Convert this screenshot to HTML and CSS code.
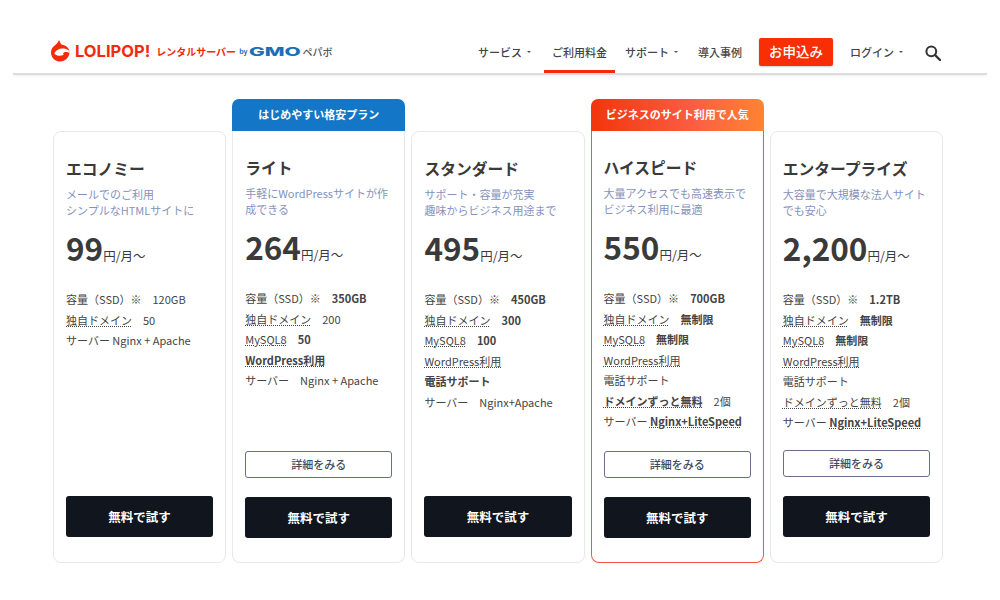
FILE: index.html
```html
<!DOCTYPE html>
<html lang="ja">
<head>
    <meta charset="utf-8">
    <title>料金プラン</title>
    <link rel="stylesheet" href="styles.css">
</head>
<body>
    <header class="header">
        <div class="logo">
            <svg class="logo-mark" width="19" height="22" viewBox="0 0 19 22">
                <path d="M8 0c1.500 2.200 1 3.800 3 4.700 3.800.4 7.500 3.400 7.500 7.400 0 5.300-4.300 9.400-9.300 9.400C4 21.500 0 17.300 0 12.400 0 8.800 2 6.800 4 5.200 5.800 3.800 7 2.500 8 0z" fill="#f32a0c"/>
                <path d="M3.500 13c2-3.500 5.500-5 9-4.500 2.500.3 5 1.300 6 3v1.500c-1.500-1-4-1.200-5.500-.5-1.200.6-1 1.800-.2 2.200-2.500 1.200-5 1.300-7 .5-1.500-.6-2.500-1.200-2.300-2.200z" fill="#fff"/>
            </svg>
            <span class="logo-name">LOLIPOP!</span>
            <span class="logo-sub">レンタルサーバー</span>
            <span class="logo-by">by</span>
            <span class="logo-gmo"><span>GMO</span></span>
            <span class="logo-pepabo">ペパボ</span>
        </div>
        <nav class="nav">
            <a class="nav-item">サービス<i class="caret"></i></a>
            <a class="nav-item active">ご利用料金</a>
            <a class="nav-item">サポート<i class="caret"></i></a>
            <a class="nav-item">導入事例</a>
            <a class="nav-cta">お申込み</a>
            <a class="nav-item">ログイン<i class="caret"></i></a>
            <svg class="search" width="16" height="16" viewBox="0 0 16 16">
                <circle cx="6.300" cy="6.300" r="4.900" fill="none" stroke="#333" stroke-width="2"/>
                <path d="M10 10l5 5" stroke="#333" stroke-width="2.400" stroke-linecap="round"/>
            </svg>
        </nav>
    </header>

    <main class="plans">
        <section class="plan">
            <div class="plan-body">
                <h2>エコノミー</h2>
                <p class="lead">メールでのご利用<br>シンプルなHTMLサイトに</p>
                <p class="price"><b>99</b>円/月～</p>
                <ul class="specs">
                    <li>容量（SSD）※<span class="val">120GB</span></li>
                    <li><u>独自ドメイン</u><span class="val">50</span></li>
                    <li>サーバー Nginx + Apache</li>
                </ul>
                <div class="actions">
                    <a class="btn-try">無料で試す</a>
                </div>
            </div>
        </section>

        <section class="plan has-ribbon">
            <div class="ribbon ribbon-blue">はじめやすい格安プラン</div>
            <div class="plan-body">
                <h2>ライト</h2>
                <p class="lead">手軽にWordPressサイトが作<br>成できる</p>
                <p class="price"><b>264</b>円/月～</p>
                <ul class="specs">
                    <li>容量（SSD）※<strong class="val">350GB</strong></li>
                    <li><u>独自ドメイン</u><span class="val">200</span></li>
                    <li><u>MySQL8</u><strong class="val">50</strong></li>
                    <li><strong><u>WordPress利用</u></strong></li>
                    <li>サーバー<span class="val">Nginx + Apache</span></li>
                </ul>
                <div class="actions">
                    <a class="btn-more">詳細をみる</a>
                    <a class="btn-try">無料で試す</a>
                </div>
            </div>
        </section>

        <section class="plan">
            <div class="plan-body">
                <h2>スタンダード</h2>
                <p class="lead">サポート・容量が充実<br>趣味からビジネス用途まで</p>
                <p class="price"><b>495</b>円/月～</p>
                <ul class="specs">
                    <li>容量（SSD）※<strong class="val">450GB</strong></li>
                    <li><u>独自ドメイン</u><strong class="val">300</strong></li>
                    <li><u>MySQL8</u><strong class="val">100</strong></li>
                    <li><u>WordPress利用</u></li>
                    <li><strong>電話サポート</strong></li>
                    <li>サーバー<span class="val">Nginx+Apache</span></li>
                </ul>
                <div class="actions">
                    <a class="btn-try">無料で試す</a>
                </div>
            </div>
        </section>

        <section class="plan has-ribbon hot">
            <div class="ribbon ribbon-orange">ビジネスのサイト利用で人気</div>
            <div class="plan-body">
                <h2>ハイスピード</h2>
                <p class="lead">大量アクセスでも高速表示で<br>ビジネス利用に最適</p>
                <p class="price"><b>550</b>円/月～</p>
                <ul class="specs">
                    <li>容量（SSD）※<strong class="val">700GB</strong></li>
                    <li><u>独自ドメイン</u><strong class="val">無制限</strong></li>
                    <li><u>MySQL8</u><strong class="val">無制限</strong></li>
                    <li><u>WordPress利用</u></li>
                    <li>電話サポート</li>
                    <li><strong><u>ドメインずっと無料</u></strong><span class="val">2個</span></li>
                    <li>サーバー <strong><u>Nginx+LiteSpeed</u></strong></li>
                </ul>
                <div class="actions">
                    <a class="btn-more">詳細をみる</a>
                    <a class="btn-try">無料で試す</a>
                </div>
            </div>
        </section>

        <section class="plan">
            <div class="plan-body">
                <h2>エンタープライズ</h2>
                <p class="lead">大容量で大規模な法人サイト<br>でも安心</p>
                <p class="price"><b>2,200</b>円/月～</p>
                <ul class="specs">
                    <li>容量（SSD）※<strong class="val">1.2TB</strong></li>
                    <li><u>独自ドメイン</u><strong class="val">無制限</strong></li>
                    <li><u>MySQL8</u><strong class="val">無制限</strong></li>
                    <li><u>WordPress利用</u></li>
                    <li>電話サポート</li>
                    <li><u>ドメインずっと無料</u><span class="val">2個</span></li>
                    <li>サーバー <strong><u>Nginx+LiteSpeed</u></strong></li>
                </ul>
                <div class="actions">
                    <a class="btn-more">詳細をみる</a>
                    <a class="btn-try">無料で試す</a>
                </div>
            </div>
        </section>
    </main>
</body>
</html>
```

FILE: styles.css
```css
* {
    box-sizing: border-box;
}
body {
    margin: 0;
    width: 1000px;
    height: 600px;
    overflow: hidden;
    background-color: #fff;
    color: #3a3a3a;
    font-family: "Noto Sans CJK JP", "Noto Sans", sans-serif;
}
.header {
    display: flex;
    justify-content: space-between;
    align-items: center;
    height: 75px;
    margin: 0 13px;
    padding: 38px 46px 0 38px;
    border-bottom: 2px solid #dcdcdc;
    box-shadow: 0 3px 3px -2px rgba(0, 0, 0, 0.08);
}
.logo {
    display: flex;
    align-items: center;
    color: #f32a0c;
    margin-bottom: 9px;
    white-space: nowrap;
}
.logo-mark {
    margin-right: 5px;
}
.logo-name {
    font-family: "Inter", sans-serif;
    font-size: 16.5px;
    font-weight: 700;
    margin-right: 6px;
}
.logo-sub {
    font-size: 10px;
    font-weight: 700;
    margin-right: 3px;
}
.logo-by {
    font-size: 7px;
    font-weight: 700;
    color: #1b6fb5;
    margin-right: 1px;
}
.logo-gmo {
    width: 53px;
    font-family: "Inter", sans-serif;
    font-size: 12px;
    font-weight: 800;
    color: #1b6fb5;
    margin-right: 1px;
}
.logo-gmo span {
    display: inline-block;
    transform: scaleX(1.75);
    transform-origin: left center;
}
.logo-pepabo {
    font-size: 10px;
    font-weight: 500;
    color: #555;
}
.nav {
    display: flex;
    align-items: center;
    align-self: stretch;
    font-size: 11px;
    font-weight: 500;
    color: #444;
}
.nav-item {
    display: flex;
    align-items: center;
    justify-content: center;
    height: 100%;
    padding-bottom: 7px;
    white-space: nowrap;
}
.nav-item.active {
    width: 71px;
    margin: 0 10px 0 13px;
    border-bottom: 3px solid #f32a0c;
    padding-bottom: 4px;
}
.nav-item:nth-child(3) {
    margin-right: 20px;
}
.caret {
    width: 0;
    height: 0;
    margin-left: 5px;
    border-left: 2px solid transparent;
    border-right: 2px solid transparent;
    border-top: 2px solid #555;
}
.nav-cta {
    width: 74px;
    height: 28px;
    margin: 0 17px 7px;
    background-color: #f82e05;
    color: #fff;
    font-size: 13.5px;
    text-align: center;
    line-height: 27px;
    border-radius: 2px;
    box-shadow: 0 1px 2px rgba(0, 0, 0, 0.2);
}
.search {
    margin: 0 0 6px 22px;
}

.plans {
    display: flex;
    gap: 6px;
    margin-left: 53px;
    width: 890px;
    padding-top: 24px;
    height: 488px;
}
.plan {
    flex: 1 1 0;
    display: flex;
    flex-direction: column;
    padding-top: 32px;
}
.plan.has-ribbon {
    padding-top: 0;
}
.ribbon {
    height: 32px;
    line-height: 31px;
    text-align: center;
    color: #fff;
    font-size: 11px;
    font-weight: 700;
    border-radius: 7px 7px 0 0;
}
.ribbon-blue {
    background-color: #1476c6;
}
.ribbon-orange {
    background: linear-gradient(90deg, #f2350c 0%, #fb5e44 60%, #ff8432 100%);
}
.plan-body {
    flex: 1;
    display: flex;
    flex-direction: column;
    padding: 26px 12px 25px;
    border: 1px solid #ebe6e8;
    border-radius: 8px;
}
.has-ribbon .plan-body {
    border-top: 0;
    border-radius: 0 0 8px 8px;
    padding-bottom: 24px;
}
.hot .plan-body {
    border: 1px solid #f2573f;
    border-top: 0;
}
h2 {
    margin: 0;
    font-size: 15.75px;
    line-height: 22px;
    font-weight: 700;
    color: #3a3a3a;
}
.lead {
    margin: 6px 0 0;
    font-size: 11px;
    line-height: 16px;
    color: #8592bd;
    white-space: nowrap;
}
.price {
    margin: 7px 0 0;
    font-size: 12.5px;
    line-height: 44px;
    color: #3a3a3a;
}
.price b {
    font-size: 31.5px;
    font-weight: 700;
}
.specs {
    list-style: none;
    margin: 11px 0 0;
    padding: 0;
    font-size: 11px;
    color: #444;
}
.specs li {
    height: 20.5px;
    line-height: 20.5px;
    white-space: nowrap;
}
.specs u {
    text-decoration: underline dotted #444 1px;
    text-underline-offset: 1px;
}
.specs strong {
    font-weight: 700;
}
.val {
    margin-left: 11px;
}
.actions {
    margin-top: auto;
    display: flex;
    flex-direction: column;
    gap: 19px;
}
.btn-more {
    height: 27px;
    line-height: 25px;
    text-align: center;
    font-size: 11px;
    font-weight: 500;
    color: #3f4a5c;
    background-color: #fff;
    border: 1px solid #67708a;
    border-radius: 3px;
}
.btn-try {
    height: 41px;
    line-height: 41px;
    text-align: center;
    font-size: 12.5px;
    font-weight: 700;
    color: #fff;
    background-color: #10151e;
    border-radius: 3px;
}
```
